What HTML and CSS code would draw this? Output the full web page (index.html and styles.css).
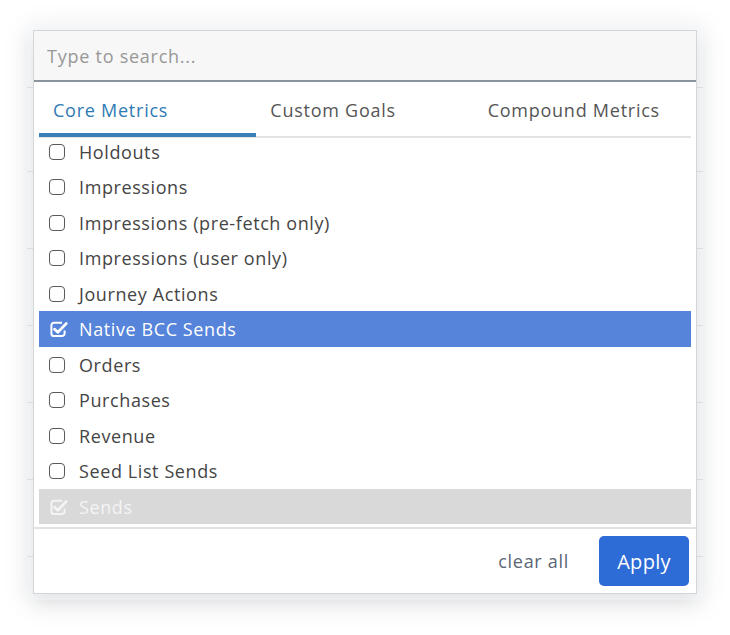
FILE: index.html
```html
<!DOCTYPE html>
<html lang="en">
<head>
<meta charset="utf-8">
<title>Metric picker</title>
<link rel="stylesheet" href="styles.css">
</head>
<body>
<div class="page">
  <div class="backdrop">
    <div class="bg-row bg-row-first"></div>
    <div class="bg-row bg-row-a"></div>
    <div class="bg-row"></div>
    <div class="bg-row"></div>
    <div class="bg-row"></div>
    <div class="bg-row"></div>
    <div class="bg-row"></div>
  </div>

  <div class="popover">
    <div class="search">
      <input class="search-input" type="text" placeholder="Type to search...">
    </div>
    <div class="tabs">
      <div class="tab tab-active">Core Metrics</div>
      <div class="tab">Custom Goals</div>
      <div class="tab">Compound Metrics</div>
    </div>
    <div class="list">
      <ul class="items">
        <li class="item"><span class="box"></span><span class="label">Holdouts</span></li>
        <li class="item"><span class="box"></span><span class="label">Impressions</span></li>
        <li class="item"><span class="box"></span><span class="label">Impressions (pre-fetch only)</span></li>
        <li class="item"><span class="box"></span><span class="label">Impressions (user only)</span></li>
        <li class="item"><span class="box"></span><span class="label">Journey Actions</span></li>
        <li class="item item-selected">
          <svg class="check" viewBox="0 0 18 16" width="18" height="16"><path d="M12 1.8H4A2.6 2.6 0 0 0 1.4 4.4v8A2.6 2.6 0 0 0 4 15h8a2.6 2.6 0 0 0 2.6-2.6V9.5" fill="none" stroke="currentColor" stroke-width="2"/><path d="M4.6 8.2l3.2 3.1L16.2 2.6" fill="none" stroke="currentColor" stroke-width="2.8" stroke-linecap="round" stroke-linejoin="round"/></svg>
          <span class="label">Native BCC Sends</span>
        </li>
        <li class="item"><span class="box"></span><span class="label">Orders</span></li>
        <li class="item"><span class="box"></span><span class="label">Purchases</span></li>
        <li class="item"><span class="box"></span><span class="label">Revenue</span></li>
        <li class="item"><span class="box"></span><span class="label">Seed List Sends</span></li>
        <li class="item item-disabled">
          <svg class="check" viewBox="0 0 18 16" width="18" height="16"><path d="M12 1.8H4A2.6 2.6 0 0 0 1.4 4.4v8A2.6 2.6 0 0 0 4 15h8a2.6 2.6 0 0 0 2.6-2.6V9.5" fill="none" stroke="currentColor" stroke-width="2"/><path d="M4.6 8.2l3.2 3.1L16.2 2.6" fill="none" stroke="currentColor" stroke-width="2.8" stroke-linecap="round" stroke-linejoin="round"/></svg>
          <span class="label">Sends</span>
        </li>
      </ul>
    </div>
    <div class="footer">
      <button class="link-btn" type="button">clear all</button>
      <button class="apply-btn" type="button">Apply</button>
    </div>
  </div>
</div>
</body>
</html>
```

FILE: styles.css
```css
* { box-sizing: border-box; }

html, body {
  margin: 0;
  padding: 0;
  background: #ffffff;
}

body {
  font-family: "Open Sans", "Liberation Sans", sans-serif;
  color: #444;
}

.page {
  position: relative;
  width: 730px;
  height: 635px;
  overflow: hidden;
  padding: 20px 0 0 27px;
}

/* faint page content behind the popover */
.backdrop {
  width: 676px;
  height: 580px;
  background: #f9fafb;
  border-radius: 6px;
  box-shadow: 0 6px 28px rgba(30, 40, 60, 0.08);
  display: flex;
  flex-direction: column;
}

.bg-row {
  height: 77px;
  flex: none;
  border-bottom: 1px solid #e3e6ea;
}

.bg-row-first { height: 68px; }
.bg-row-a { height: 84px; }

/* the popover overlay */
.popover {
  position: absolute;
  left: 33px;
  top: 30px;
  width: 664px;
  height: 564px;
  background: #ffffff;
  border: 1px solid #d6d6d6;
  box-shadow: 0 6px 18px rgba(0, 0, 0, 0.10);
  display: flex;
  flex-direction: column;
}

.search {
  height: 51px;
  flex: none;
  background: #f7f7f7;
  border-bottom: 2px solid #8a949e;
  display: flex;
}

.search-input {
  flex: 1;
  border: 0;
  background: transparent;
  padding: 0 13px;
  font-family: inherit;
  font-size: 18px;
  letter-spacing: 0.75px;
  color: #444;
  outline: none;
}

.search-input::placeholder {
  color: #979797;
}

.tabs {
  height: 56px;
  flex: none;
  margin: 0 5px;
  display: grid;
  grid-template-columns: 1fr 1fr 1fr;
  border-bottom: 2px solid #e3e3e3;
}

.tab {
  position: relative;
  padding: 16px 15px 0 14px;
  font-size: 18px;
  line-height: 24px;
  letter-spacing: 0.75px;
  color: #555;
}

.tab-active {
  color: #2e7ab4;
}

.tab-active::after {
  content: "";
  position: absolute;
  left: 0;
  right: 0;
  bottom: -1px;
  height: 4px;
  background: #3a7fb7;
}

.list {
  height: 389px;
  flex: none;
  overflow: hidden;
  padding: 0 5px;
}

.items {
  list-style: none;
  margin: -4.25px 0 0;
  padding: 0;
}

.item {
  height: 35.5px;
  display: flex;
  align-items: center;
  padding-left: 10px;
  font-size: 18px;
  letter-spacing: 0.6px;
  color: #454545;
}

.box {
  width: 16px;
  height: 16px;
  flex: none;
  border: 1.8px solid #5a5a5a;
  border-radius: 4px;
  margin-right: 14px;
}

.check {
  flex: none;
  margin-left: 1px;
  margin-right: 11px;
}

.label {
  white-space: nowrap;
}

.item-selected {
  background: #5584da;
  color: #ffffff;
}

.item-disabled {
  background: #d9d9d9;
  color: #f4f4f4;
}

.footer {
  flex: 1;
  border-top: 2px solid #e2e2e2;
  display: flex;
  align-items: center;
  justify-content: flex-end;
  padding: 0 7px 0 0;
  gap: 30px;
}

.link-btn {
  border: 0;
  background: transparent;
  padding: 0;
  font-family: inherit;
  font-size: 18px;
  letter-spacing: 0.7px;
  color: #5b6675;
}

.apply-btn {
  width: 90px;
  height: 50px;
  border: 0;
  border-radius: 5px;
  background: #2d6bd6;
  color: #ffffff;
  font-family: inherit;
  font-size: 20px;
  letter-spacing: 0.3px;
}
```
